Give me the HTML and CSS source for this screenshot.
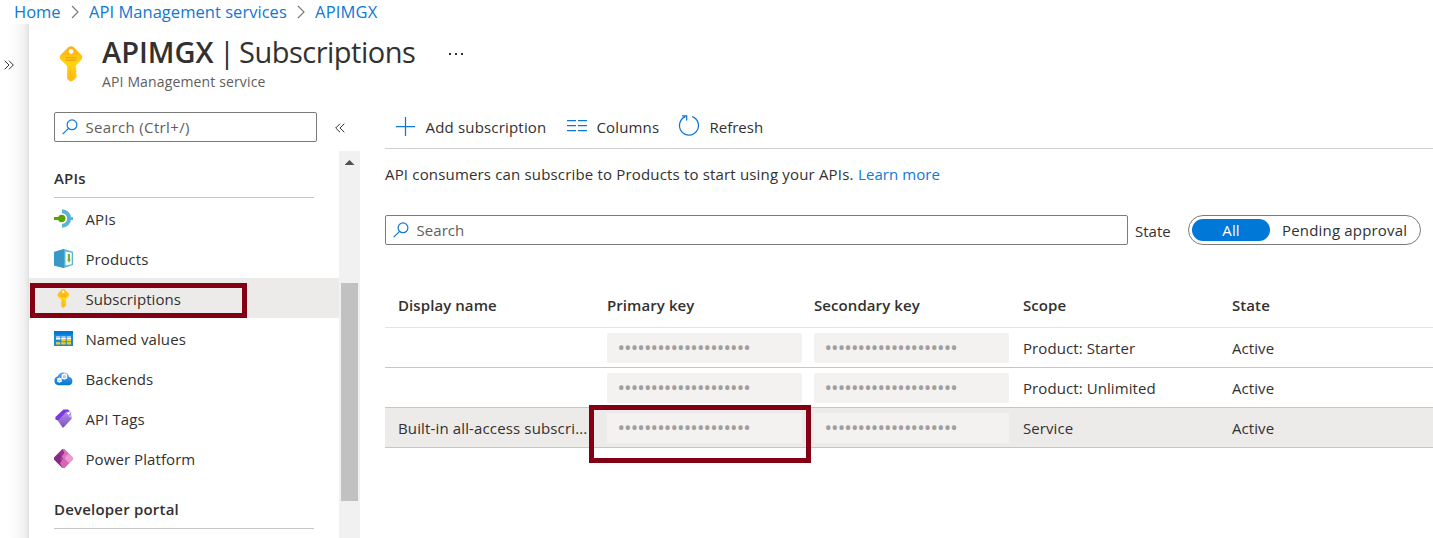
FILE: index.html
```html
<!DOCTYPE html>
<html lang="en">
<head>
<meta charset="utf-8">
<title>APIMGX | Subscriptions</title>
<link rel="stylesheet" href="styles.css">
</head>
<body>
<svg class="defs" width="0" height="0">
  <defs>
    <linearGradient id="gold" x1="0" y1="0" x2="0" y2="1"><stop offset="0" stop-color="#feab1b"/><stop offset=".5" stop-color="#ffd70f"/><stop offset="1" stop-color="#feb81b"/></linearGradient>
    <linearGradient id="cloud" x1="0" y1="0" x2="0" y2="1"><stop offset="0" stop-color="#5ea0ef"/><stop offset="1" stop-color="#0078d4"/></linearGradient>
    <linearGradient id="tag" x1="0" y1="0" x2="0" y2="1"><stop offset="0" stop-color="#b796f9"/><stop offset="1" stop-color="#7f4fb8"/></linearGradient>
    <symbol id="key" viewBox="0 0 24 37">
      <path fill="url(#gold)" d="M9.500 1Q12 -.4 14.500 1L22.800 9.300Q24.400 11.700 22.800 14L17 20V22.500L18 23.700L17 25L18 26.300L17 27.700L18 29L17 30.300L18 31.500L13.500 36Q12 37 10.500 36L8 33.500V20.500L1.200 14Q-.4 11.700 1.200 9.300Z"/>
      <circle cx="12" cy="5.500" r="2.400" fill="#fff"/>
      <path d="M6.500 12H17.500M6.500 14.500H17.500" stroke="#f59c12" stroke-width="1.100"/>
      <path d="M11.300 21V32.500" stroke="#fea11b" stroke-width="1" opacity=".6"/>
    </symbol>
    <symbol id="lens" viewBox="0 0 16 16"><circle cx="10" cy="5.800" r="4.900"/><path d="M6.500 9.400L.7 15.200"/></symbol>
  </defs>
</svg>
<nav class="crumbs">
  <a class="c1">Home</a><svg class="chev" viewBox="0 0 8 14"><path d="M1 1L7 7L1 13"/></svg>
  <a class="c2">API Management services</a><svg class="chev" viewBox="0 0 8 14"><path d="M1 1L7 7L1 13"/></svg>
  <a class="c3">APIMGX</a>
</nav>
<div class="shell">
  <div class="rail"><svg class="dbl" viewBox="0 0 10 10"><path d="M.7 .7L5 5L.7 9.300M5 .7L9.300 5L5 9.300"/></svg></div>
  <div class="blade">
    <header class="head">
      <svg class="headkey"><use href="#key"/></svg>
      <div>
        <h1><b>APIMGX</b><span class="bar">|</span><span class="ttl">Subscriptions</span><i class="dots"></i></h1>
        <p class="sub">API Management service</p>
      </div>
    </header>
    <div class="cols">
      <aside class="side">
        <div class="siderow">
          <div class="search"><svg class="lens"><use href="#lens"/></svg><span>Search (Ctrl+/)</span></div>
          <svg class="dbl low" viewBox="0 0 10 10"><path d="M5 .7L.7 5L5 9.300M9.300 .7L5 5L9.300 9.300"/></svg>
        </div>
        <div class="sidebody">
          <div class="menu">
            <h2 class="g1">APIs</h2>
            <a class="item"><svg viewBox="0 0 19 19"><path d="M8 2.300A7.200 7.200 0 0 1 8 16.700" fill="none" stroke="#59b4d9" stroke-width="4"/><path d="M15 8H19V11H15Z" fill="#59b4d9"/><circle cx="7.700" cy="9.500" r="3.700" fill="#57a300"/><path d="M0 8H6V11H0Z" fill="#57a300"/></svg><span>APIs</span></a>
            <a class="item"><svg viewBox="0 0 19 19"><path d="M0 3L10 0L19 2.800V16L10 19L0 16.500Z" fill="#59b4d9"/><path d="M0 3L10 0V19L0 16.500Z" fill="#3999c6"/><path d="M11.500 2.600L17.700 3.800V15.300L11.500 16.600Z" fill="#fff"/><path d="M13.800 5H16V10.500H17L15 13.800L13 10.500H13.800Z" fill="#6bb92f"/></svg><span>Products</span></a>
            <a class="item on"><svg viewBox="0 0 19 19"><use href="#key" x="3" y="0" width="12.500" height="19"/></svg><span>Subscriptions</span></a>
            <a class="item"><svg viewBox="0 0 19 19"><path d="M0 2H19V17H0Z" fill="#1b87dc"/><path d="M0 2H19V5.500H0Z" fill="#0078d4"/><path d="M2 7H6.300V11H2ZM7.300 7H11.600V11H7.300ZM12.700 7H17V11H12.700Z" fill="#9cc9fb"/><path d="M2 9.500H6.300M7.300 9.500H11.600M12.700 9.500H17" stroke="#fff" stroke-width="1"/><path d="M2 12.800H6.300V15.500H2ZM7.300 10.500H11.600V15.500H7.300ZM12.700 10.500H17V15.500H12.700Z" fill="#f5cf13"/><path d="M2 12.700H17" stroke="#1b87dc" stroke-width=".7"/></svg><span>Named values</span></a>
            <a class="item"><svg viewBox="0 0 19 19"><path d="M4.500 16.200A4.600 4.600 0 0 1 3.800 7.200A6 6 0 0 1 15.200 8A4.200 4.200 0 0 1 15 16.200Z" fill="url(#cloud)"/><circle cx="10.400" cy="7.400" r="2.200" class="gear"/><circle cx="5.500" cy="11.200" r="1.700" class="gear"/><path d="M10.400 4V10.800M7.400 5.700L13.400 9.100M13.400 5.700L7.400 9.100M5.500 8.400V14M3 9.800L8 12.600M8 9.800L3 12.600" class="teeth"/></svg><span>Backends</span></a>
            <a class="item"><svg viewBox="0 0 19 19"><path d="M8.500 18.500Q9.300 19 10 18L17.500 10V4L15 1L9 2L2 9Z" fill="url(#tag)"/><path d="M1.400 10.500V8L9.500 .6H14L16 3L12.500 2.500L4 11.500Z" fill="#773adc"/><circle cx="14.500" cy="4.200" r="1.200" fill="#fff"/><path d="M15 2.500Q18.500 3 17.300 6.500Q16 8.500 14.700 6.500" fill="none" stroke="#fff" stroke-width=".8"/></svg><span>API Tags</span></a>
            <a class="item"><svg viewBox="0 0 19 19"><path d="M8.500 0H10.500L19 8.500V10.500L10.500 19H8.500L0 10.500V8.500Z" fill="#dc72bd"/><path d="M8.500 0L0 8.500V10.500L8.500 19L9.500 14L6 9.500L10.500 4Z" fill="#9d3090"/><path d="M0 10L5 5L9.500 9.500L5.500 14L8.500 19Z" fill="#742774" opacity=".55"/><path d="M14.500 4.200L19 8.700V10.300L15 14.300L10.500 9.500Z" fill="#e99bd2"/><path d="M10 9.500L15 14.300L10.500 19H8.500L6 14Z" fill="#d665b3"/></svg><span>Power Platform</span></a>
            <h2 class="g2">Developer portal</h2>
          </div>
          <div class="scroll"><i class="up"></i><i class="thumb"></i></div>
        </div>
      </aside>
      <main class="main">
        <div class="tools">
          <svg class="plus" viewBox="0 0 19 19"><path d="M9.500 0V19M0 9.500H19"/></svg><span class="t1">Add subscription</span>
          <svg class="colic" viewBox="0 0 20 13"><path d="M0 1.500H9M11 1.500H20M0 6.500H9M11 6.500H20M0 11.500H9M11 11.500H20"/></svg><span class="t2">Columns</span>
          <svg class="ref" viewBox="0 0 21 21"><path d="M13.200 1.600A9.500 9.500 0 1 1 6.500 1.700M3 .8H7.700V5.400"/></svg><span class="t3">Refresh</span>
        </div>
        <p class="intro"><span class="i1">API consumers can subscribe to Products to start using your APIs.</span> <a>Learn more</a></p>
        <div class="filter">
          <div class="search wide"><svg class="lens"><use href="#lens"/></svg><span>Search</span></div>
          <span class="f1">State</span>
          <div class="pill"><span class="all">All</span><span class="pend">Pending approval</span></div>
        </div>
        <div class="table">
          <div class="row th"><span>Display name</span><span>Primary key</span><span>Secondary key</span><span>Scope</span><span>State</span></div>
          <div class="row"><span></span><span class="key">••••••••••••••••••••</span><span class="key">••••••••••••••••••••</span><span>Product: Starter</span><span>Active</span></div>
          <div class="row"><span></span><span class="key">••••••••••••••••••••</span><span class="key">••••••••••••••••••••</span><span>Product: Unlimited</span><span>Active</span></div>
          <div class="row sel"><span class="name">Built-in all-access subscri...</span><span class="key">••••••••••••••••••••</span><span class="key">••••••••••••••••••••</span><span>Service</span><span>Active</span></div>
        </div>
      </main>
    </div>
  </div>
</div>
<div class="mark nav-mark"></div>
<div class="mark key-mark"></div>
</body>
</html>
```
FILE: styles.css
```css
* { box-sizing: border-box; margin: 0; padding: 0; }
body { width: 1433px; height: 538px; overflow: hidden; position: relative; background: #fff; color: #323130; font: 15px/20px "Open Sans", "Noto Sans", sans-serif; letter-spacing: .08px; display: flex; flex-direction: column; }
span, a, b { white-space: nowrap; }
svg { display: block; flex: none; overflow: visible; }
.defs { position: absolute; }
.crumbs { height: 24px; display: flex; align-items: center; padding-left: 14px; font-size: 16.5px; letter-spacing: 0; color: #0f78d4; line-height: 24px; }
.crumbs a { flex: none; }
.c1 { width: 47px; }
.c2 { width: 198px; letter-spacing: .04px; }
.chev { width: 8px; height: 14px; margin: 0 10px; fill: none; stroke: #767676; stroke-width: 1.1; }
.c3 { letter-spacing: .2px; }
.shell { flex: 1; display: flex; }
.rail { width: 29px; flex: none; padding: 36px 0 0 4px; background: linear-gradient(90deg, #fff 8px, #f9f9f9 18px, #f0f0f0 25px, #e2e2e2); }
.dbl { width: 10px; height: 10px; fill: none; stroke: #323130; stroke-width: 1; }
.low { margin-top: 1px; }
.blade { flex: 1; display: flex; flex-direction: column; }
.head { height: 88px; display: flex; }
.headkey { width: 24px; height: 36px; margin: 21.5px 19px 0 29.5px; }
h1 { height: 44px; margin: 6px 0 0 .5px; display: flex; align-items: center; font-size: 29px; letter-spacing: 0; line-height: 44px; font-weight: 400; }
h1 b { width: 117px; font-weight: 600; }
.bar { width: 20px; }
.ttl { width: 210px; letter-spacing: -.5px; }
.dots { width: 14px; height: 2px; margin-top: 4px; background: radial-gradient(circle at 1px 1px, #323130 1px, transparent 1.2px) 0 0 / 6px 2px; }
.sub { font-size: 14px; letter-spacing: .14px; line-height: 20px; margin: -2px 0 0 .5px; color: #605e5c; }
.cols { flex: 1; display: flex; }
.side { width: 331px; flex: none; display: flex; flex-direction: column; }
.siderow { height: 39px; display: flex; align-items: center; padding: 0 0 9px 25px; gap: 18px; }
.search { width: 263px; height: 30px; border: 1px solid #7d7b79; border-radius: 2px; display: flex; align-items: center; padding-left: 7px; gap: 7.5px; letter-spacing: .35px; color: #605e5c; }
.lens { width: 16px; height: 16px; fill: none; stroke: #0f78d4; stroke-width: 1.2; }
.wide.search { letter-spacing: .05px; }
.sidebody { flex: 1; display: flex; }
.menu { width: 310px; }
h2 { font-size: 15px; font-weight: 600; line-height: 20px; height: 30px; width: 260px; margin-left: 25px; letter-spacing: .2px; border-bottom: 1px solid #c8c6c4; }
.g1 { margin-top: 17px; }
.g2 { margin-top: 21px; }
.item { height: 40px; display: flex; align-items: center; padding-left: 25px; gap: 12.5px; }
.item svg { width: 19px; height: 19px; margin-top: 0; }
.item span { padding-top: 2px; }
.on { background: #edebe9; }
.gear { fill: none; stroke: #fff; stroke-width: 1.4; }
.teeth { stroke: #fff; stroke-width: .8; opacity: .7; }
.scroll { width: 21px; background: #f1f1f1; padding: 9px 2px 0; }
.up { display: block; width: 10px; height: 5px; margin: 0 auto; background: #505050; clip-path: polygon(50% 0, 100% 100%, 0 100%); }
.thumb { display: block; width: 17px; height: 218px; margin-top: 118px; background: #c1c1c1; }
.main { flex: 1; padding-left: 25px; }
.tools { height: 37px; border-bottom: 1px solid #d2d0ce; display: flex; align-items: center; padding: 0 0 6px 10px; }
.tools svg { fill: none; stroke: #0f78d4; stroke-width: 1.25; }
.plus { width: 19px; height: 19px; margin: -2px 11px 0 .5px; }
.colic { width: 20px; height: 13px; margin: -3px 10px 0 0; }
.ref { width: 21px; height: 21px; margin: -3px 10px 0 0; }
.t1 { width: 141px; letter-spacing: .18px; }
.t2 { width: 82px; letter-spacing: .15px; }
.t3 { letter-spacing: 0; }
.intro { margin-top: 15px; height: 51px; display: flex; }
.i1 { width: 473px; letter-spacing: .17px; }
.intro a { color: #0f78d4; }
.filter { display: flex; height: 30px; align-items: center; }
.wide { width: 743px; }
.f1 { width: 53px; margin-left: 7px; padding-top: 2px; letter-spacing: 0; }
.pill { width: 233px; height: 30px; border: 1px solid #7d7b79; border-radius: 15px; padding: 0 3px; display: flex; align-items: center; gap: 12px; }
.pend { letter-spacing: .18px; }
.all { width: 78px; height: 22px; border-radius: 11px; background: #0078d7; color: #fff; text-align: center; line-height: 22px; }
.table { margin-top: 39px; }
.row { height: 40px; display: grid; grid-template-columns: 209px 207px 209px 209px 1fr; align-items: center; padding-left: 13px; border-bottom: 1px solid #c8c6c4; }
.row > span { padding-top: 1px; }
.name { letter-spacing: .14px; }
.th { height: 44px; font-weight: 600; border-color: #e6e4e2; }
.th > span { padding: 0 0 2px; }
.row .key { width: 195px; height: 30px; border-radius: 2px; background: #f3f2f1; color: #a19f9d; padding: 0 0 0 10.5px; line-height: 30px; font-size: 20px; letter-spacing: -.9px; }
.sel { background: #edebe9; }
.mark { position: absolute; border: 5px solid #830014; }
.nav-mark { left: 30px; top: 283px; width: 217px; height: 35px; }
.key-mark { left: 589px; top: 405px; width: 222px; height: 58px; }
```
